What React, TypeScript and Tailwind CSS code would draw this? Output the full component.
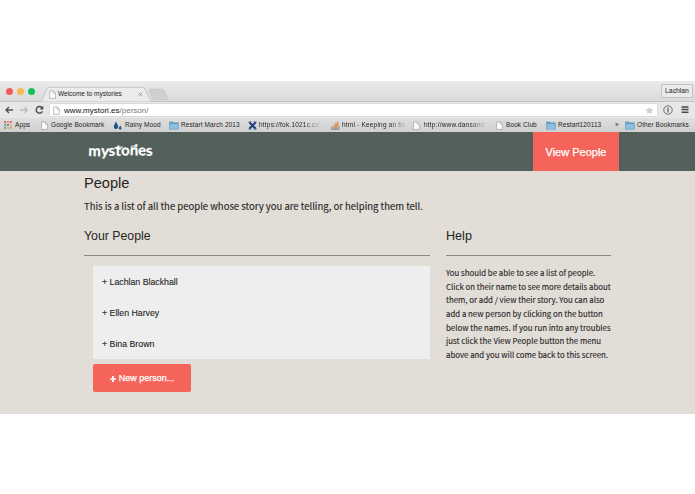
import React from "react";

const PageIcon = ({ className = "" }: { className?: string }) => (
  <svg viewBox="0 0 7 9" className={`h-[9px] w-[7px] shrink-0 ${className}`}>
    <path d="M.6.9h3.6l2.2 2.3v5.2H.6z" fill="#fcfcfc" stroke="#a3a3a3" strokeWidth=".7" />
    <path d="M4.2.9v2.3h2.2" fill="none" stroke="#a3a3a3" strokeWidth=".6" />
  </svg>
);

const FolderIcon = () => (
  <svg viewBox="0 0 10 9" className="h-[9px] w-[10px] shrink-0">
    <path d="M.6 8V.9h3.3l.8.9h4.6V8z" fill="#65a0c8" stroke="#5289b0" strokeWidth=".5" />
    <path d="M.6 2.700h8.700v5.500H.6z" fill="#8dbfe0" stroke="#6499bc" strokeWidth=".4" />
  </svg>
);

const AppsIcon = () => {
  const colors = ["#e36d62", "#e58a70", "#e36d62", "#62a985", "#6685c5", "#e2b366", "#62a985", "#e2b366", "#d99b5c"];
  return (
    <svg viewBox="0 0 8 8" className="h-2 w-2 shrink-0">
      {colors.map((c, i) => (
        <rect key={i} x={(i % 3) * 2.9} y={Math.floor(i / 3) * 2.9} width="2" height="2" fill={c} />
      ))}
    </svg>
  );
};

const DropsIcon = () => (
  <svg viewBox="0 0 9 9" className="h-[9px] w-[9px] shrink-0" fill="#1f5287">
    <path d="M3 .5C3.7 2.4 5.2 4 5.2 5.7a2.2 2.2 0 0 1-4.4 0C.8 4 2.4 2.4 3 .5z" />
    <path d="M7.2 4.6c.3 1 1.3 1.7 1.3 2.6a1.3 1.3 0 0 1-2.6 0c0-.9 1-1.6 1.3-2.6z" />
  </svg>
);

const JoomlaIcon = () => (
  <svg viewBox="0 0 9 9" className="h-[9px] w-[9px] shrink-0">
    <path d="M1.5 1.5 7.5 7.5M7.5 1.5 1.5 7.5" stroke="#203f7d" strokeWidth="2" />
    <path d="M.6 1.2h2.7M5.8 1.2h2.7M.6 7.9h2.7M5.8 7.9h2.7" stroke="#31548f" strokeWidth="1.2" />
  </svg>
);

const StackIcon = () => (
  <svg viewBox="0 0 9 9" className="h-[9px] w-[9px] shrink-0" fill="none">
    <path d="M.8 5.300v3h7v-3" stroke="#85807a" strokeWidth="1" />
    <path d="M2.200 7h4.300" stroke="#85807a" strokeWidth="1" />
    <path d="M2.300 5.400l4.300.5M2.800 3.700l4 1.300M4 1.900l3.200 2.400M6 .4l1.700 3.100" stroke="#e2873e" strokeWidth="1.050" />
  </svg>
);

const TabStrip = () => (
  <div className="flex h-[20px] items-start bg-gradient-to-b from-[#ebebeb] to-[#dadada]">
    <div className="flex gap-[4px] pt-[7px] pl-[6px]">
      <i className="size-[7px] rounded-full bg-[#f25b57]" />
      <i className="size-[7px] rounded-full bg-[#f8b950]" />
      <i className="size-[7px] rounded-full bg-[#16bf5b]" />
    </div>
    <div className="relative ml-[4px] h-[21px] w-[130px]">
      <svg viewBox="0 0 130 21" className="absolute inset-0 h-[21px] w-[130px]">
        <path d="M111 8h11.500q2 0 3 2l2.500 6.500q.8 2-1.200 2h-10q-3 0-4-2l-2.600-7q-.7-1.500.8-1.500z" fill="#d0d0d0" stroke="#c2c2c2" strokeWidth=".6" />
        <path d="M0 20.500c2.500 0 3.200-1.300 4-3.500l3.500-8.200q1-2.500 3.500-2.500h92q2.500 0 3.500 2.500l3.500 8.200c.8 2.200 1.500 3.500 4 3.500" fill="#ebebeb" stroke="#b9b9b9" strokeWidth=".7" />
      </svg>
      <div className="relative flex items-center pt-[8px] pl-[10px]">
        <PageIcon />
        <span className="ml-[2px] w-[66px] text-[6.5px] leading-[10px] whitespace-nowrap text-[#222]">Welcome to mystories</span>
        <svg viewBox="0 0 5 5" className="ml-[14px] size-[5px]"><path d="m.6.6 3.600 3.600M4.200.6.6 4.200" stroke="#888" strokeWidth=".8" /></svg>
      </div>
    </div>
    <div className="mt-[3px] mr-[2px] ml-auto flex h-[14px] w-[32px] items-center justify-center rounded-[1px] border border-[#c2c2c2] bg-[#eaeaea] pt-px text-[6.8px] text-[#222]">Lachlan</div>
  </div>
);

const Toolbar = () => (
  <div className="flex h-[17px] items-center border-t border-[#c4c4c4] bg-[#e7e7e7]">
    <svg viewBox="0 0 46 12" className="h-[12px] w-[46px] shrink-0" fill="none">
      <path d="M13 6H6M9 3 6 6l3 3" stroke="#4e4e4e" strokeWidth="1.400" />
      <path d="M20 6h7M24.500 3l3 3-3 3" stroke="#bcbcbc" strokeWidth="1.300" />
      <path d="M42 3.700A3.300 3.300 0 1 0 42.500 7.200" stroke="#4e4e4e" strokeWidth="1.400" />
      <path d="M43.300 1.800v3.700h-3.700z" fill="#4e4e4e" />
    </svg>
    <div className="ml-[3px] flex h-[14px] w-[609px] items-center rounded-[1px] border border-[#dadada] bg-white pr-[3px] pl-[3px]">
      <PageIcon />
      <span className="ml-[4px] pt-px text-[8px] leading-[12px] text-[#111]">www.mystori.es<span className="text-[#777]">/person/</span></span>
      <svg viewBox="0 0 10 10" className="ml-auto size-[9px]"><path d="m5 .5 1.300 3 3.300.3-2.500 2.200.8 3.200L5 7.500 2.100 9.200l.8-3.200L.4 3.800l3.300-.3z" fill="#cdcdcd" /></svg>
    </div>
    <svg viewBox="0 0 10 10" className="ml-[5px] size-[10px]" fill="none">
      <circle cx="5" cy="5" r="4.200" stroke="#606060" strokeWidth=".9" />
      <path d="M5 2.400v5.200" stroke="#606060" strokeWidth="1.300" />
    </svg>
    <svg viewBox="0 0 8 8" className="ml-[8px] size-[8px]"><path d="M.5 1h7M.5 3.600h7M.5 6.200h7" stroke="#484848" strokeWidth="1.500" /></svg>
  </div>
);

const Bookmark = ({ icon, label, width, gap = "gap-[2px]", fade = false }: { icon: React.ReactNode; label: string; width: string; gap?: string; fade?: boolean }) => (
  <div className={`flex shrink-0 items-center whitespace-nowrap ${gap} ${width}`}>
    {icon}
    <span className={fade ? "tracking-[0.200px] [mask-image:linear-gradient(to_right,#000_75%,transparent_105%)]" : ""}>{label}</span>
  </div>
);

const Bookmarks = () => (
  <div className="flex h-[14px] items-center bg-gradient-to-b from-[#dfdfdf] to-[#d0d0d0] pl-[4px] text-[6.500px] leading-[10px] tracking-[0.090px] text-[#252525]">
    <Bookmark icon={<AppsIcon />} label="Apps" width="w-[37px]" gap="gap-[3px]" />
    <Bookmark icon={<PageIcon />} label="Google Bookmark" width="w-[72px]" gap="gap-[3px]" />
    <Bookmark icon={<DropsIcon />} label="Rainy Mood" width="w-[56px]" gap="gap-[3px]" />
    <Bookmark icon={<FolderIcon />} label="Restart March 2013" width="w-[79px]" />
    <Bookmark icon={<JoomlaIcon />} label="https://fok.1021c.co" width="w-[83px]" fade />
    <Bookmark icon={<StackIcon />} label="html - Keeping an fix" width="w-[82px]" fade />
    <Bookmark icon={<PageIcon />} label="http://www.dansand" width="w-[83px]" gap="gap-[4px]" fade />
    <Bookmark icon={<PageIcon />} label="Book Club" width="w-[50px]" gap="gap-[3px]" />
    <Bookmark icon={<FolderIcon />} label="Restart120113" width="w-[69px]" />
    <span className="w-[10px]">»</span>
    <Bookmark icon={<FolderIcon />} label="Other Bookmarks" width="w-[70px]" />
  </div>
);

const people = ["Lachlan Blackhall", "Ellen Harvey", "Bina Brown"];

const helpLines = [
  "You should be able to see a list of people.",
  "Click on their name to see more details about",
  "them, or add / view their story. You can also",
  "add a new person by clicking on the button",
  "below the names. If you run into any troubles",
  "just click the View People button the menu",
  "above and you will come back to this screen.",
];

export default function App() {
  return (
    <div className="h-[494px] w-[695px] overflow-hidden bg-white pt-[81px] font-['Liberation_Sans',Arial,sans-serif]">
      <TabStrip />
      <Toolbar />
      <Bookmarks />
      <header className="flex h-[39px] bg-[#53605b]">
        <div className="w-[533px] pt-[6px] pl-[88px]">
          <svg viewBox="0 0 70 26" className="h-[26px] w-[70px] font-['Lato',sans-serif] text-[15px] font-bold" fill="white" stroke="white" strokeWidth=".2">
            <text x="0.200 12.800 20.800 27.300 33.300 41.800 46.800 50.300 58.300" y="18 17.800 18 17.400 17.600 17 17.600 17.600 18" rotate="1 4 -4 3 -2 2 -3 -2 -4">mystories</text>
            <path d="M27 9.600 34.500 9M43.500 8.200l5-.5" strokeWidth="1.100" strokeLinecap="round" />
          </svg>
        </div>
        <a className="flex w-[86px] items-center justify-center bg-[#f4645a] pt-px text-[11px] text-white [-webkit-text-stroke:0.250px_white]">View People</a>
      </header>
      <main className="h-[243px] bg-[#e2ddd7] pl-[84px] text-[#252525]">
        <h1 className="pt-[2px] text-[14.600px] leading-[20px]">People</h1>
        <p className="pt-[5px] font-['Noto_Sans_CJK_SC',sans-serif] text-[9.520px] leading-[16px] [-webkit-text-stroke:0.120px_#252525]">This is a list of all the people whose story you are telling, or helping them tell.</p>
        <div className="flex gap-[16px] pt-[14px]">
          <section className="w-[346px]">
            <h2 className="h-[28px] border-b border-[#8b8b84] text-[12.300px] leading-[16px]">Your People</h2>
            <ul className="mt-[10px] ml-[9px] h-[93px] bg-[#eee] pl-[9px]">
              {people.map((name) => (
                <li key={name} className="h-[31px] text-[8.800px] leading-[32px] tracking-[-0.020px] [-webkit-text-stroke:0.100px_#252525]">+ {name}</li>
              ))}
            </ul>
            <button className="mt-[5px] ml-[9px] flex h-[28px] w-[98px] items-center justify-center gap-[3px] rounded-[2px] bg-[#f4645a] pt-px text-[9px] text-white [-webkit-text-stroke:0.250px_white]">
              <svg viewBox="0 0 7 7" className="size-[6px]"><path d="M3.500 0v7M0 3.500h7" stroke="white" strokeWidth="2" /></svg>
              New person...
            </button>
          </section>
          <aside className="w-[165px]">
            <h2 className="h-[28px] border-b border-[#8b8b84] text-[12.600px] leading-[16px]">Help</h2>
            <div className="pt-[10px] font-['Noto_Sans_CJK_SC',sans-serif] text-[7.850px] leading-[13.650px] whitespace-nowrap [-webkit-text-stroke:0.100px_#252525]">
              {helpLines.map((line) => <div key={line}>{line}</div>)}
            </div>
          </aside>
        </div>
      </main>
    </div>
  );
}
